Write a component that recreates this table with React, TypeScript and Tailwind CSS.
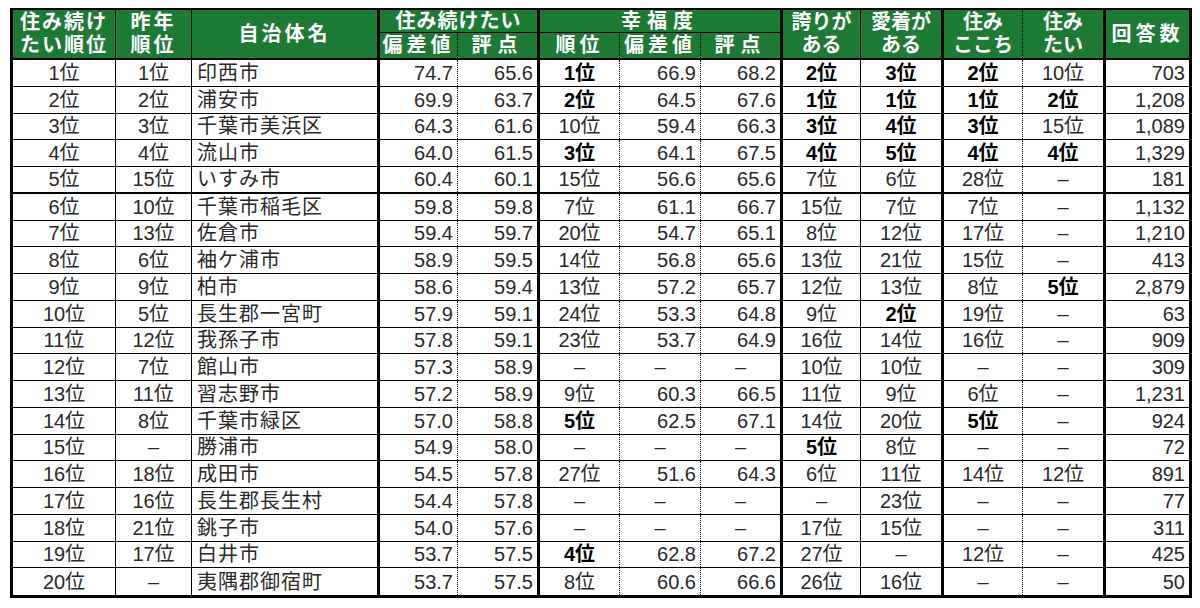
import React from "react";

type Row = (string | number)[];

const COLS =
  "grid grid-cols-[103px_76px_188px_78px_82px_80px_81px_82px_78px_83px_79px_83px_83px]";

// right edge of each column
const edge = [
  "border-r border-black",
  "border-r border-black",
  "border-r-[3px] border-black",
  "border-r border-dotted border-black",
  "border-r-[3px] border-black",
  "border-r border-dotted border-black",
  "border-r border-dotted border-black",
  "border-r-[3px] border-black",
  "border-r border-black",
  "border-r-[3px] border-black",
  "border-r border-dotted border-black",
  "border-r-[3px] border-black",
  "",
];

const rows: Row[] = [
  [1, 1, "印西市", "74.7", "65.6", 1, "66.9", "68.2", 2, 3, 2, 10, "703"],
  [2, 2, "浦安市", "69.9", "63.7", 2, "64.5", "67.6", 1, 1, 1, 2, "1,208"],
  [3, 3, "千葉市美浜区", "64.3", "61.6", 10, "59.4", "66.3", 3, 4, 3, 15, "1,089"],
  [4, 4, "流山市", "64.0", "61.5", 3, "64.1", "67.5", 4, 5, 4, 4, "1,329"],
  [5, 15, "いすみ市", "60.4", "60.1", 15, "56.6", "65.6", 7, 6, 28, "-", "181"],
  [6, 10, "千葉市稲毛区", "59.8", "59.8", 7, "61.1", "66.7", 15, 7, 7, "-", "1,132"],
  [7, 13, "佐倉市", "59.4", "59.7", 20, "54.7", "65.1", 8, 12, 17, "-", "1,210"],
  [8, 6, "袖ケ浦市", "58.9", "59.5", 14, "56.8", "65.6", 13, 21, 15, "-", "413"],
  [9, 9, "柏市", "58.6", "59.4", 13, "57.2", "65.7", 12, 13, 8, 5, "2,879"],
  [10, 5, "長生郡一宮町", "57.9", "59.1", 24, "53.3", "64.8", 9, 2, 19, "-", "63"],
  [11, 12, "我孫子市", "57.8", "59.1", 23, "53.7", "64.9", 16, 14, 16, "-", "909"],
  [12, 7, "館山市", "57.3", "58.9", "-", "-", "-", 10, 10, "-", "-", "309"],
  [13, 11, "習志野市", "57.2", "58.9", 9, "60.3", "66.5", 11, 9, 6, "-", "1,231"],
  [14, 8, "千葉市緑区", "57.0", "58.8", 5, "62.5", "67.1", 14, 20, 5, "-", "924"],
  [15, "-", "勝浦市", "54.9", "58.0", "-", "-", "-", 5, 8, "-", "-", "72"],
  [16, 18, "成田市", "54.5", "57.8", 27, "51.6", "64.3", 6, 11, 14, 12, "891"],
  [17, 16, "長生郡長生村", "54.4", "57.8", "-", "-", "-", "-", 23, "-", "-", "77"],
  [18, 21, "銚子市", "54.0", "57.6", "-", "-", "-", 17, 15, "-", "-", "311"],
  [19, 17, "白井市", "53.7", "57.5", 4, "62.8", "67.2", 27, "-", 12, "-", "425"],
  [20, "-", "夷隅郡御宿町", "53.7", "57.5", 8, "60.6", "66.6", 26, 16, "-", "-", "50"],
];

const rankCols = [0, 1, 5, 8, 9, 10, 11];
const boldCols = [5, 8, 9, 10, 11];

function Cell({ value, col }: { value: string | number; col: number }) {
  const isDash = value === "-";
  const isRank = rankCols.includes(col);
  const bold = boldCols.includes(col) && typeof value === "number" && value <= 5;

  let align = "justify-end pr-[4px]";
  if (col === 2) align = "justify-start pl-[5px] tracking-[1px]";
  else if (isRank || isDash) align = "justify-center";

  return (
    <div
      className={`flex items-center overflow-hidden whitespace-nowrap ${align} ${edge[col]} ${
        bold ? "font-bold text-black" : ""
      }`}
    >
      {isDash ? "–" : isRank ? `${value}位` : value}
    </div>
  );
}

function Head({
  children,
  className,
}: {
  children: React.ReactNode;
  className: string;
}) {
  return (
    <div
      className={`flex flex-col items-center justify-center leading-[23px] ${className}`}
    >
      {children}
    </div>
  );
}

export default function App() {
  return (
    <div className="h-[608px] w-[1200px] bg-white pl-[10px] pt-[8px] font-['Liberation_Sans','Noto_Sans_CJK_JP',sans-serif]">
      <div className="w-[1182px] border-[3px] border-t-2 border-black">
        {/* header */}
        <div
          className={`${COLS} grid-rows-[23px_25px] border-b-2 border-black bg-[#1d7a35] text-[20px] font-bold text-white`}
        >
          <Head className={`row-span-2 tracking-[2px] ${edge[0]}`}>
            <span>住み続け</span>
            <span>たい順位</span>
          </Head>
          <Head className={`row-span-2 tracking-[3px] ${edge[1]}`}>
            <span>昨年</span>
            <span>順位</span>
          </Head>
          <Head className={`row-span-2 tracking-[3px] ${edge[2]}`}>自治体名</Head>
          <Head className="col-span-2 border-b border-r-[3px] border-black tracking-[1px]">
            住み続けたい
          </Head>
          <Head className="col-span-3 border-b border-r-[3px] border-black tracking-[6px]">
            幸福度
          </Head>
          <Head className={`row-span-2 ${edge[8]}`}>
            <span>誇りが</span>
            <span>ある</span>
          </Head>
          <Head className={`row-span-2 ${edge[9]}`}>
            <span>愛着が</span>
            <span>ある</span>
          </Head>
          <Head className={`row-span-2 ${edge[10]}`}>
            <span>住み</span>
            <span>ここち</span>
          </Head>
          <Head className={`row-span-2 ${edge[11]}`}>
            <span>住み</span>
            <span>たい</span>
          </Head>
          <Head className="row-span-2 tracking-[4px]">回答数</Head>
          <Head className={`tracking-[4px] ${edge[3]}`}>偏差値</Head>
          <Head className={`tracking-[6px] ${edge[4]}`}>評点</Head>
          <Head className={`tracking-[4px] ${edge[5]}`}>順位</Head>
          <Head className={`tracking-[4px] ${edge[6]}`}>偏差値</Head>
          <Head className={`tracking-[6px] ${edge[7]}`}>評点</Head>
        </div>

        {/* body */}
        <div className="text-[20px] leading-none text-[#2a2a2a]">
          {rows.map((row, i) => (
            <div
              key={i}
              className={`${COLS} h-[26.75px] ${
                i === rows.length - 1
                  ? ""
                  : i === 4
                  ? "border-b-2 border-black"
                  : "border-b border-black"
              }`}
            >
              {row.map((v, c) => (
                <Cell key={c} value={v} col={c} />
              ))}
            </div>
          ))}
        </div>
      </div>
    </div>
  );
}
